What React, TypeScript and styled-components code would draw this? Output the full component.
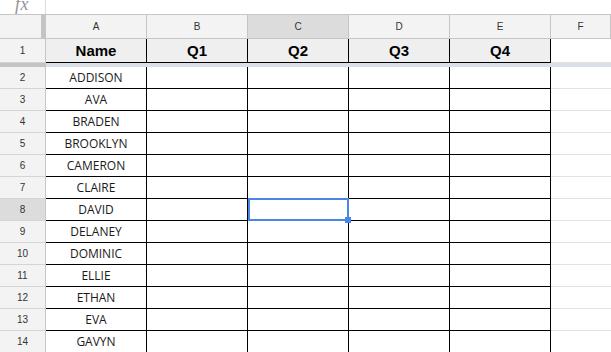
import React from "react";
import styled, { createGlobalStyle } from "styled-components";

const GlobalStyle = createGlobalStyle`
  html, body { margin: 0; padding: 0; background: #ffffff; overflow: hidden; }
  * { box-sizing: border-box; }
`;

const Page = styled.div`
  width: 611px;
  height: 352px;
  overflow: hidden;
  background: #ffffff;
`;

const FormulaBar = styled.div`
  display: flex;
  height: 15px;
  border-bottom: 1px solid #c6c6c6;
  overflow: hidden;
`;

const FxBox = styled.div`
  width: 46px;
  border-right: 1px solid #dcdcdc;
  display: flex;
  justify-content: center;
  overflow: hidden;
`;

const FxLabel = styled.span`
  font-family: "Liberation Serif", "DejaVu Serif", serif;
  font-style: italic;
  font-size: 18px;
  line-height: 18px;
  color: #959595;
  margin-top: -5px;
  margin-left: -1px;
  letter-spacing: 0.5px;
`;

const Grid = styled.div`
  display: grid;
  grid-template-columns: 46px repeat(5, 101px) 60px;
`;

const Corner = styled.div`
  height: 24px;
  background: #f3f3f3;
  border-right: 5px solid #c4c4c4;
  border-bottom: 1px solid #c6c6c6;
`;

const ColHeader = styled.div<{ $selected?: boolean }>`
  height: 24px;
  display: flex;
  align-items: center;
  justify-content: center;
  background: ${(p) => (p.$selected ? "#dcdcdc" : "#f3f3f3")};
  border-right: 1px solid #c6c6c6;
  border-bottom: 1px solid #c6c6c6;
  font-family: "Liberation Sans", Arial, sans-serif;
  font-size: 10px;
  color: #333333;
`;

const RowHeader = styled.div<{ $selected?: boolean; $tall?: boolean }>`
  height: ${(p) => (p.$tall ? "24px" : "22px")};
  display: flex;
  align-items: center;
  justify-content: center;
  background: ${(p) => (p.$selected ? "#dcdcdc" : "#f3f3f3")};
  border-right: 1px solid #c6c6c6;
  border-bottom: 1px solid #d4d4d4;
  font-family: "Liberation Sans", Arial, sans-serif;
  font-size: 10px;
  color: #333333;
`;

const TitleCell = styled.div`
  height: 24px;
  display: flex;
  align-items: center;
  justify-content: center;
  background: #efefef;
  border-right: 1px solid #000000;
  border-bottom: 1px solid #000000;
  font-family: "Liberation Sans", Arial, sans-serif;
  font-weight: bold;
  font-size: 15px;
  color: #000000;
`;

const EmptyCell = styled.div<{ $tall?: boolean }>`
  height: ${(p) => (p.$tall ? "24px" : "22px")};
  background: #ffffff;
  border-bottom: 1px solid #e2e2e2;
`;

const FrozenHead = styled.div`
  height: 4px;
  background: #c4c4c4;
`;

const FrozenBar = styled.div`
  height: 4px;
  grid-column: 2 / span 6;
  background: #dbe0e8;
`;

const DataCell = styled.div`
  position: relative;
  height: 22px;
  display: flex;
  align-items: center;
  justify-content: center;
  background: #ffffff;
  border-right: 1px solid #000000;
  border-bottom: 1px solid #000000;
  font-family: "Open Sans", "Noto Sans", sans-serif;
  font-size: 12px;
  color: #1a1a1a;
`;

const Selection = styled.div`
  position: absolute;
  z-index: 2;
  top: -1px;
  left: 0;
  width: 101px;
  height: 23px;
  border: 2px solid #4a86e8;
  pointer-events: none;
`;

const Handle = styled.div`
  position: absolute;
  z-index: 3;
  left: 97px;
  top: 18px;
  width: 6px;
  height: 6px;
  background: #4a86e8;
`;

const names = [
  "ADDISON",
  "AVA",
  "BRADEN",
  "BROOKLYN",
  "CAMERON",
  "CLAIRE",
  "DAVID",
  "DELANEY",
  "DOMINIC",
  "ELLIE",
  "ETHAN",
  "EVA",
  "GAVYN",
];

const columns = ["A", "B", "C", "D", "E", "F"];
const titles = ["Name", "Q1", "Q2", "Q3", "Q4"];

export default function App() {
  return (
    <Page>
      <GlobalStyle />
      <FormulaBar>
        <FxBox>
          <FxLabel>fx</FxLabel>
        </FxBox>
      </FormulaBar>
      <Grid>
        <Corner />
        {columns.map((c) => (
          <ColHeader key={c} $selected={c === "C"}>
            {c}
          </ColHeader>
        ))}

        <RowHeader $tall>1</RowHeader>
        {titles.map((t) => (
          <TitleCell key={t}>{t}</TitleCell>
        ))}
        <EmptyCell $tall />

        <FrozenHead />
        <FrozenBar />

        {names.map((name, i) => {
          const row = i + 2;
          return (
            <React.Fragment key={name}>
              <RowHeader $selected={row === 8}>{row}</RowHeader>
              <DataCell>{name}</DataCell>
              <DataCell />
              <DataCell>
                {row === 8 && (
                  <>
                    <Selection />
                    <Handle />
                  </>
                )}
              </DataCell>
              <DataCell />
              <DataCell />
              <EmptyCell />
            </React.Fragment>
          );
        })}
      </Grid>
    </Page>
  );
}
